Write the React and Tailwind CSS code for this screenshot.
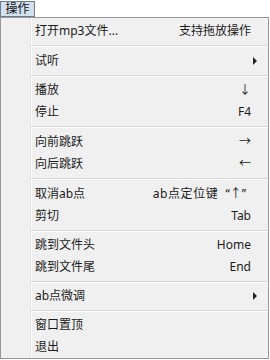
import React from "react";

const groups = [
  [{ l: "打开mp3文件...", r: "支持拖放操作" }],
  [{ l: "试听", sub: true }],
  [
    { l: "播放", r: "↓" },
    { l: "停止", r: "F4" },
  ],
  [
    { l: "向前跳跃", r: "→" },
    { l: "向后跳跃", r: "←" },
  ],
  [
    { l: "取消ab点", r: "ab点定位键", q: "“↑”" },
    { l: "剪切", r: "Tab" },
  ],
  [
    { l: "跳到文件头", r: "Home" },
    { l: "跳到文件尾", r: "End" },
  ],
  [{ l: "ab点微调", sub: true }],
  [{ l: "窗口置顶" }, { l: "退出" }],
];

const sepH = ["h-[8px]", "h-[7px]", "h-[8px]", "h-[8px]", "h-[7px]", "h-[7px]", "h-[7px]"];

function Row({ item }) {
  return (
    <div className="flex h-[22px] items-center leading-[22px]">
      <div className="w-[34px] shrink-0" />
      <div className="flex-1 whitespace-nowrap">{item.l}</div>
      {item.r && !item.q && <div className="pr-[17px] whitespace-nowrap">{item.r}</div>}
      {item.q && (
        <div className="pr-[22px] whitespace-nowrap flex">
          <span className="tracking-[0.6px]">{item.r}</span>
          <span className="ml-[7px]">{item.q}</span>
        </div>
      )}
      {item.sub && (
        <div className="pr-[10px] flex items-center">
          <svg width="5" height="8" viewBox="0 0 5 8">
            <path d="M0 0 L4 4 L0 8 Z" fill="#222" />
          </svg>
        </div>
      )}
    </div>
  );
}

function Sep({ h }) {
  return (
    <div className={h + " flex flex-col justify-center pl-[30px] pr-[1px]"}>
      <div className="h-px bg-[#d7d7d7]" />
      <div className="h-px bg-white" />
    </div>
  );
}

export default function App() {
  return (
    <div
      className="w-[270px] h-[360px] bg-white text-[12px] text-[#1b1b1b]"
      style={{ fontFamily: '"Noto Sans", "Noto Sans CJK SC", sans-serif' }}
    >
      <div className="h-[17px]">
        <div className="inline-flex h-[16px] w-[35px] items-center justify-center border border-[#6f7d8c] bg-[#d3e0ef] text-[12px] leading-none text-[#111]">
          操作
        </div>
      </div>
      <div className="relative w-[269px] h-[342px] border border-[#979797] bg-[#f0f0f0] pt-[2px]">
        <div className="absolute left-[29px] top-[1px] bottom-[1px] w-[2px] flex">
          <div className="w-px bg-[#e2e2e2]" />
          <div className="w-px bg-white" />
        </div>
        <div className="relative">
          {groups.map((g, gi) => (
            <React.Fragment key={gi}>
              {gi > 0 && <Sep h={sepH[gi - 1]} />}
              {g.map((it, i) => (
                <Row key={i} item={it} />
              ))}
            </React.Fragment>
          ))}
        </div>
      </div>
    </div>
  );
}
